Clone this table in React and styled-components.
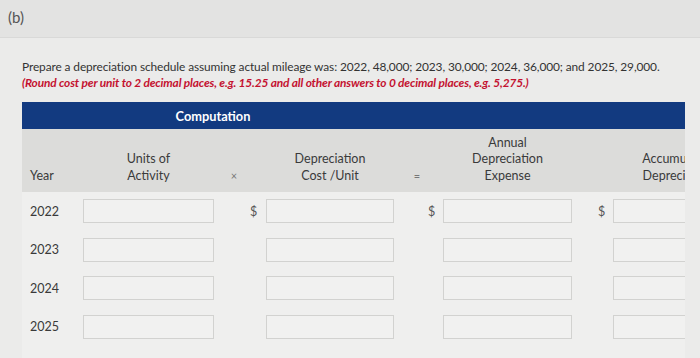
import React from "react";
import styled, { createGlobalStyle } from "styled-components";

const GlobalStyle = createGlobalStyle`
  html, body {
    margin: 0;
    padding: 0;
    background: #ebebea;
  }
  body {
    font-family: Lato, "Open Sans", "Liberation Sans", sans-serif;
    color: #333;
  }
`;

const PartBar = styled.div`
  height: 38px;
  background: #e3e3e2;
  border-bottom: 1px solid #d9d9d8;
  padding: 8px 0 0 8px;
  box-sizing: border-box;
  font-size: 15px;
  color: #555;
`;

const Content = styled.div`
  padding: 21px 0 0 22px;
`;

const Instructions = styled.p`
  margin: 0;
  font-size: 11.9px;
  line-height: 16px;
  letter-spacing: -0.1px;
  white-space: nowrap;
  color: #333;
`;

const Hint = styled.span`
  display: block;
  color: #c41230;
  font-weight: 700;
  font-style: italic;
  letter-spacing: -0.15px;
`;

const TableClip = styled.div`
  margin-top: 11px;
  width: 663px;
  overflow: hidden;
`;

const Table = styled.div`
  width: 760px;
`;

const TitleBar = styled.div`
  height: 27px;
  background: #123a80;
  display: grid;
  grid-template-columns: 61px 260px;
  align-items: center;
  color: #fff;
  font-weight: 700;
  font-size: 12.8px;
`;

const TitleText = styled.div`
  grid-column: 2;
  text-align: center;
`;

const cols = "61px 131px 36px 16px 128px 34px 15px 129px 26px 15px 130px";

const HeadRow = styled.div`
  display: grid;
  grid-template-columns: ${cols};
  height: 63px;
  align-items: end;
  background: #dcdcda;
  padding-bottom: 8px;
  box-sizing: border-box;
  font-size: 12.5px;
  line-height: 16.5px;
  color: #3a3a3a;
`;

const HeadCell = styled.div`
  text-align: ${(p) => p.$align || "center"};
  padding-left: ${(p) => (p.$align === "left" ? "8px" : "0")};
  white-space: nowrap;
`;

const Operator = styled.div`
  text-align: center;
  color: #777;
  font-size: 11px;
  padding-left: ${(p) => p.$shift || 0}px;
`;

const Body = styled.div`
  background: #efefee;
  padding-bottom: 14px;
`;

const Row = styled.div`
  display: grid;
  grid-template-columns: ${cols};
  height: 38.5px;
  align-items: center;
  font-size: 12.5px;
  color: #3a3a3a;
`;

const YearCell = styled.div`
  padding-left: 8px;
`;

const Dollar = styled.div`
  grid-column: ${(p) => p.$col};
  font-size: 12.5px;
  color: #555;
`;

const Field = styled.input`
  grid-column: ${(p) => p.$col};
  height: 24px;
  box-sizing: border-box;
  border: 1px solid #d2d2d0;
  background: #f1f1f0;
  margin: 0;
  padding: 0 4px;
  font-family: inherit;
  font-size: 12.5px;
  outline: none;
`;

const years = ["2022", "2023", "2024", "2025"];

export default function App() {
  return (
    <>
      <GlobalStyle />
      <PartBar>(b)</PartBar>
      <Content>
        <Instructions>
          Prepare a depreciation schedule assuming actual mileage was: 2022, 48,000; 2023, 30,000; 2024, 36,000; and 2025, 29,000.
          <Hint>
            (Round cost per unit to 2 decimal places, e.g. 15.25 and all other answers to 0 decimal places, e.g. 5,275.)
          </Hint>
        </Instructions>

        <TableClip>
          <Table>
            <TitleBar>
              <TitleText>Computation</TitleText>
            </TitleBar>
            <HeadRow>
              <HeadCell $align="left">Year</HeadCell>
              <HeadCell>
                Units of
                <br />
                Activity
              </HeadCell>
              <Operator $shift={4}>×</Operator>
              <div />
              <HeadCell>
                Depreciation
                <br />
                Cost /Unit
              </HeadCell>
              <Operator $shift={12}>=</Operator>
              <div />
              <HeadCell>
                Annual
                <br />
                Depreciation
                <br />
                Expense
              </HeadCell>
              <div />
              <div />
              <HeadCell>
                Accumulated
                <br />
                Depreciation
              </HeadCell>
            </HeadRow>
            <Body>
              {years.map((y, i) => (
                <Row key={y}>
                  <YearCell>{y}</YearCell>
                  <Field $col={2} />
                  {i === 0 && <Dollar $col={4}>$</Dollar>}
                  <Field $col={5} />
                  {i === 0 && <Dollar $col={7}>$</Dollar>}
                  <Field $col={8} />
                  {i === 0 && <Dollar $col={10}>$</Dollar>}
                  <Field $col={11} />
                </Row>
              ))}
            </Body>
          </Table>
        </TableClip>
      </Content>
    </>
  );
}
